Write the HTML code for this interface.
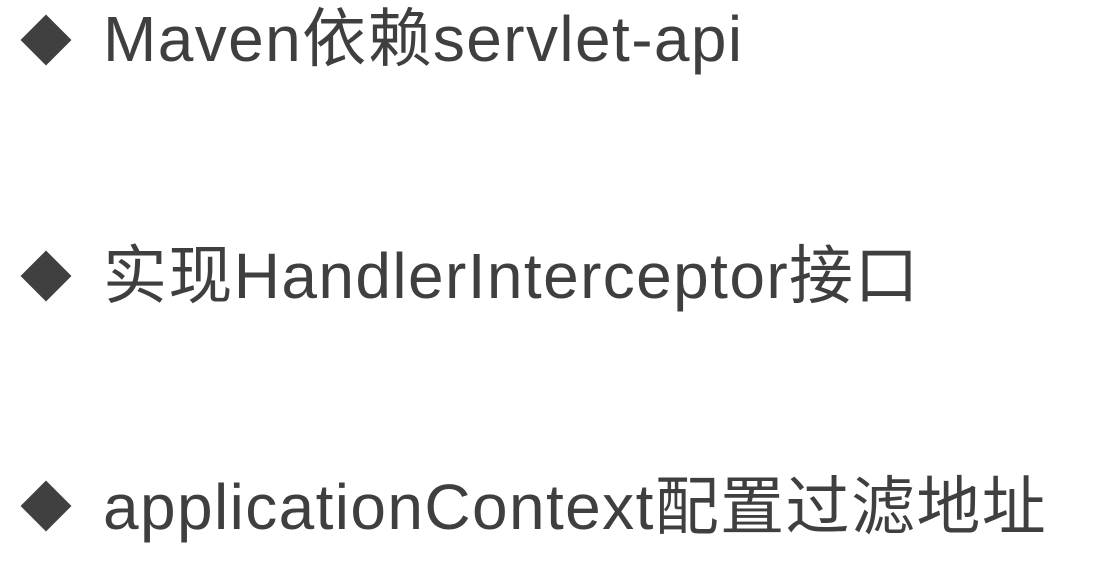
<!DOCTYPE html>
<html><head><meta charset="utf-8"><style>
html,body{margin:0;padding:0;background:#fff;width:1095px;height:564px;overflow:hidden}
.l{position:absolute;left:0;height:80px;width:1095px}
.d{position:absolute;left:28px;width:36px;height:36px;background:#404040;transform:rotate(45deg)}
.t{position:absolute;left:103px;font-family:"Liberation Sans","Noto Sans CJK SC",sans-serif;font-size:64px;color:#3f3f3f;white-space:nowrap;line-height:1;letter-spacing:1.4px}
</style></head><body>
<div class="l" style="top:0"><div class="d" style="top:22px"></div><div class="t" style="top:7px">Maven依赖servlet-api</div></div>
<div class="l" style="top:238px"><div class="d" style="top:20px"></div><div class="t" style="top:6px">实现HandlerInterceptor接口</div></div>
<div class="l" style="top:468px"><div class="d" style="top:20px"></div><div class="t" style="top:7px">applicationContext配置过滤地址</div></div>
</body></html>
